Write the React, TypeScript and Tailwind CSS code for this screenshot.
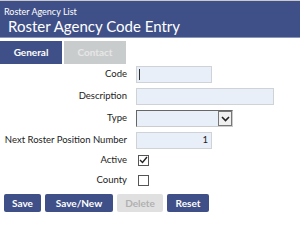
import React from "react";

const font = { fontFamily: 'Lato, "Open Sans", "Noto Sans", sans-serif' };

export default function App() {
  return (
    <div className="w-[300px] h-[241px] bg-white overflow-hidden relative" style={font}>
      <div className="h-[1px] bg-[#c9c9c9]" />
      <div className="h-[37px] bg-[#3f5088] border-b border-[#8a96b8] text-white">
        <div className="text-[9px] leading-[11px] pt-[5px] pl-[4px] whitespace-nowrap">Roster Agency List</div>
        <div className="text-[15px] leading-[18px] pl-[8px] whitespace-nowrap">Roster Agency Code Entry</div>
      </div>
      <div className="flex gap-[2px] mt-[3px] h-[23px]">
        <div className="w-[62px] bg-[#3f5088] text-white font-bold text-[10px] flex items-center justify-center">General</div>
        <div className="w-[62px] bg-[#c9cccd] text-[#e6e6e6] font-bold text-[10px] flex items-center justify-center">Contact</div>
      </div>
      <div className="flex flex-col text-[9.5px] text-[#222] mt-[2px] whitespace-nowrap">
        <div className="flex items-center h-[17px]">
          <div className="w-[128px] text-right pr-[1px]">Code</div>
          <div className="ml-[8px] w-[76px] h-[17px] bg-[#e8eff8] border border-[#cfd3d8] flex items-center pl-[2px]">
            <div className="w-[1px] h-[11px] bg-[#333]" />
          </div>
        </div>
        <div className="flex items-center h-[17px] mt-[5px]">
          <div className="w-[128px] text-right pr-[1px]">Description</div>
          <div className="ml-[8px] w-[138px] h-[17px] bg-[#e8eff8] border border-[#cfd3d8]" />
        </div>
        <div className="flex items-center h-[17px] mt-[5px]">
          <div className="w-[128px] text-right pr-[1px]">Type</div>
          <div className="ml-[8px] w-[97px] h-[17px] bg-[#e8eff8] border border-[#666] border-r-[#ccc] border-b-[#ccc] flex justify-end">
            <div className="w-[14px] h-[15px] border border-[#777] bg-[#f0f0f0] flex items-center justify-center">
              <svg width="9" height="6" viewBox="0 0 9 6"><path d="M1 1 L4.5 4.5 L8 1" stroke="#222" strokeWidth="1.6" fill="none" /></svg>
            </div>
          </div>
        </div>
        <div className="flex items-center h-[17px] mt-[5px]">
          <div className="w-[128px] text-right pr-[1px]">Next Roster Position Number</div>
          <div className="ml-[8px] w-[76px] h-[17px] bg-[#e8eff8] border border-[#cfd3d8] flex items-center justify-end pr-[3px]">1</div>
        </div>
        <div className="flex items-center h-[12px] mt-[5px]">
          <div className="w-[128px] text-right pr-[1px]">Active</div>
          <div className="ml-[10px] w-[11px] h-[11px] border border-[#555] bg-white flex items-center justify-center">
            <svg width="9" height="8" viewBox="0 0 9 8"><path d="M1 4 L3.5 6.5 L8 1" stroke="#222" strokeWidth="1.4" fill="none" /></svg>
          </div>
        </div>
        <div className="flex items-center h-[12px] mt-[8px]">
          <div className="w-[128px] text-right pr-[1px]">County</div>
          <div className="ml-[10px] w-[11px] h-[11px] border border-[#555] bg-white" />
        </div>
        <div className="flex gap-[4px] ml-[4px] mt-[8px] text-[10px] font-bold">
          <div className="w-[37px] h-[18px] bg-[#3f5088] text-white rounded-[2px] flex items-center justify-center">Save</div>
          <div className="w-[68px] h-[18px] bg-[#3f5088] text-white rounded-[2px] flex items-center justify-center">Save/New</div>
          <div className="w-[46px] h-[18px] bg-[#e0e0e0] text-[#b0b0b0] rounded-[2px] flex items-center justify-center">Delete</div>
          <div className="w-[42px] h-[18px] bg-[#3f5088] text-white rounded-[2px] flex items-center justify-center">Reset</div>
        </div>
      </div>
    </div>
  );
}
